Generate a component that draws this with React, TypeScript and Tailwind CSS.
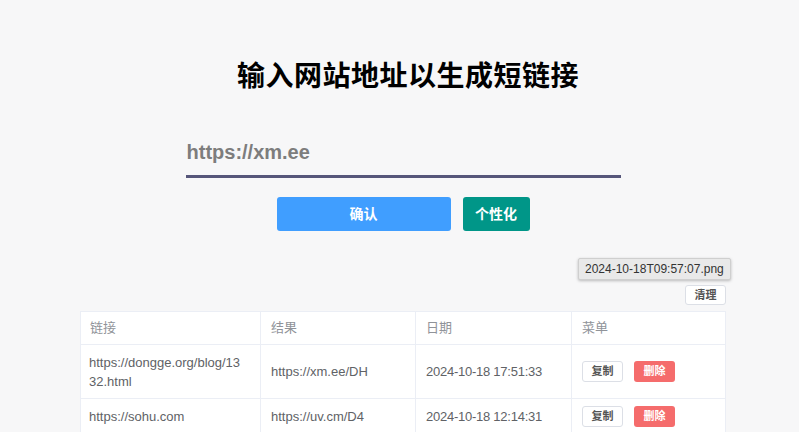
import type React from "react"

const rows = [
  { link: "https://dongge.org/blog/1332.html", short: "https://xm.ee/DH", date: "2024-10-18 17:51:33" },
  { link: "https://sohu.com", short: "https://uv.cm/D4", date: "2024-10-18 12:14:31" },
]

const font = { fontFamily: '"Liberation Sans", "Noto Sans CJK SC", sans-serif' }

const App: React.FC = () => {
  return (
    <div className="min-h-screen bg-[#f7f7f8] relative overflow-hidden" style={font}>
      <div className="w-[646px] ml-[80px] flex flex-col items-center pt-[57px]">
        {/* Title */}
        <h1 className="pl-[10px] text-[28px] leading-[40px] font-bold text-black tracking-[0.5px]">输入网站地址以生成短链接</h1>

        {/* Input */}
        <div className="mt-[31px] w-[435px] h-[50px] border-b-[3px] border-[#56567a] flex items-center">
          <input
            className="w-full bg-transparent outline-none px-[1px] text-[20px] font-bold placeholder:text-[#7d7d7d]"
            placeholder="https://xm.ee"
          />
        </div>

        {/* Buttons */}
        <div className="mt-[19px] flex gap-3">
          <button className="w-[174px] h-[34px] rounded-[3px] bg-[#409eff] text-white text-[14px] font-bold">确认</button>
          <button className="w-[67px] h-[34px] rounded-[3px] bg-[#009688] text-white text-[14px] font-bold">个性化</button>
        </div>

        {/* Clear */}
        <div className="w-full flex justify-end mt-[54px]">
          <button className="w-[41px] h-[20px] bg-white border border-[#dcdfe6] rounded-[3px] text-[11px] text-[#555] font-bold leading-none">
            清理
          </button>
        </div>

        {/* Table */}
        <div className="w-full mt-[6px] bg-white border border-[#ebeef5] text-[13px]">
          <div className="grid grid-cols-[180px_155px_156px_1fr] h-[33px] text-[#909399] border-b border-[#ebeef5]">
            <div className="px-[9px] flex items-center border-r border-[#ebeef5]">链接</div>
            <div className="px-[10px] flex items-center border-r border-[#ebeef5]">结果</div>
            <div className="px-[10px] flex items-center border-r border-[#ebeef5]">日期</div>
            <div className="px-[10px] flex items-center">菜单</div>
          </div>
          {rows.map((r, i) => (
            <div
              key={i}
              className={`grid grid-cols-[180px_155px_156px_1fr] text-[#606266] border-b border-[#ebeef5] ${i === 0 ? "h-[54px]" : "h-[36px]"}`}
            >
              <div className="pl-[8px] pr-[19px] flex items-center border-r border-[#ebeef5] leading-[19px] break-all">{r.link}</div>
              <div className="px-[10px] flex items-center border-r border-[#ebeef5]">{r.short}</div>
              <div className="px-[10px] flex items-center border-r border-[#ebeef5] tracking-[-0.25px]">{r.date}</div>
              <div className="px-[10px] flex items-center gap-[11px]">
                <button className="w-[41px] h-[21px] bg-white border border-[#dcdfe6] rounded-[3px] text-[11px] text-[#555] font-bold leading-none">
                  复制
                </button>
                <button className="w-[41px] h-[21px] bg-[#f56c6c] rounded-[3px] text-[11px] text-white font-bold leading-none">
                  删除
                </button>
              </div>
            </div>
          ))}
        </div>
      </div>

      {/* Browser tooltip */}
      <div className="absolute left-[578px] top-[258px] h-[22px] px-[6px] flex items-center bg-[#e9e9e9] border border-[#cfcfcf] rounded-[2px] shadow-[0_1px_3px_rgba(0,0,0,0.25)] text-[12px] text-[#333]">
        2024-10-18T09:57:07.png
      </div>
    </div>
  )
}

export default App
